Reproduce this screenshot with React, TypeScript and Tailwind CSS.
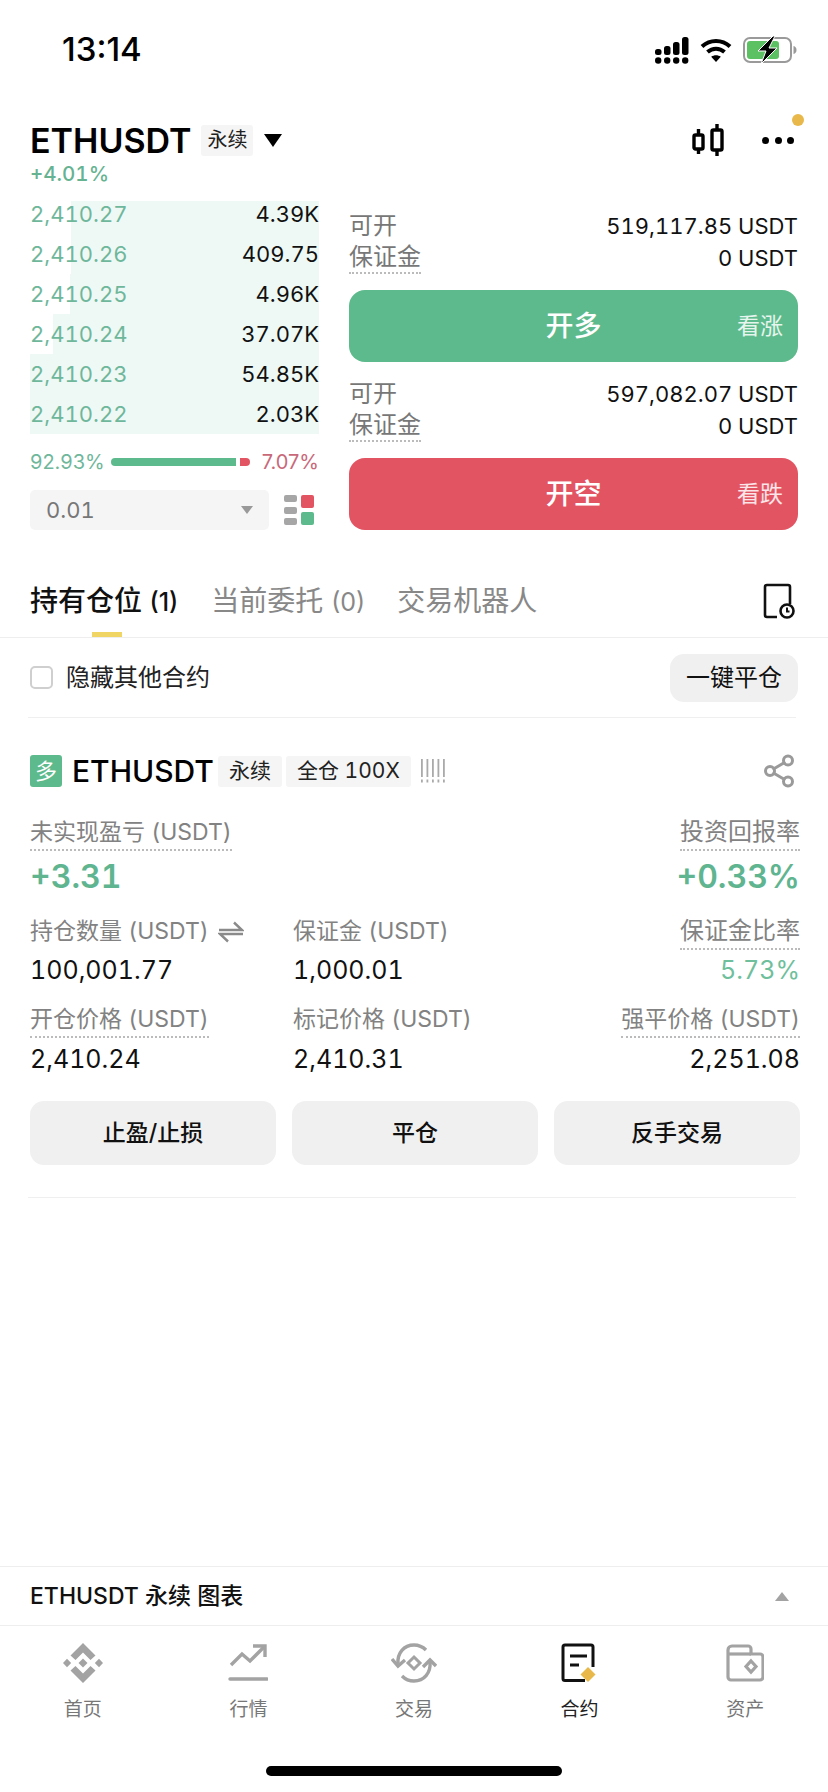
import { Share2 } from "lucide-react";

const FONT = 'font-["Inter","Noto_Sans_CJK_SC",sans-serif]';

function SignalIcon() {
  return (
    <svg width="34" height="27" viewBox="0 0 34 27" fill="#000">
      <rect x="0" y="12" width="6.5" height="6" rx="2.5" />
      <rect x="9" y="9" width="6.5" height="9" rx="2.5" />
      <rect x="18" y="5" width="6.5" height="13" rx="2.5" />
      <rect x="27" y="0" width="6.5" height="18" rx="2.5" />
      <circle cx="3.2" cy="23.5" r="3.2" />
      <circle cx="12.2" cy="23.5" r="3.2" />
      <circle cx="21.2" cy="23.5" r="3.2" />
      <circle cx="30.2" cy="23.5" r="3.2" />
    </svg>
  );
}

function WifiIcon() {
  return (
    <svg width="32" height="26" viewBox="0 0 32 26" fill="none" stroke="#000" strokeWidth="4">
      <path d="M2 9.5C10 2 22 2 30 9.5" />
      <path d="M7.5 15C12.5 10.6 19.5 10.6 24.5 15" />
      <path d="M16 25l-4.8-5.2c2.8-2 6.8-2 9.6 0z" fill="#000" stroke="none" />
    </svg>
  );
}

function BatteryIcon() {
  return (
    <svg width="54" height="28" viewBox="0 0 54 28" fill="none">
      <rect x="1" y="2" width="47" height="24" rx="6" stroke="#9a9a9a" strokeWidth="2" />
      <rect x="4" y="5" width="32" height="18" rx="3" fill="#5cc163" />
      <path d="M50.5 10c2 .6 3 2 3 4s-1 3.4-3 4z" fill="#9a9a9a" />
      <path d="M30 0L15 15h8l-5 13 16-16h-8l6-12z" fill="#000" stroke="#fff" strokeWidth="1" />
    </svg>
  );
}

function CandleIcon() {
  return (
    <svg width="32" height="34" viewBox="0 0 32 34" fill="none" stroke="#000" strokeWidth="3.4">
      <rect x="2" y="12" width="9" height="14" rx="1.5" />
      <path d="M6.5 6v6M6.5 26v5" />
      <rect x="20" y="7" width="10" height="20" rx="1.5" />
      <path d="M25 1v6M25 27v6" />
    </svg>
  );
}

function LayoutIcon() {
  return (
    <svg width="30" height="30" viewBox="0 0 30 30">
      <rect x="0" y="0" width="13" height="7" rx="2" fill="#a6a6a6" />
      <rect x="0" y="12" width="13" height="7" rx="2" fill="#a6a6a6" />
      <rect x="0" y="23" width="13" height="7" rx="2" fill="#a6a6a6" />
      <rect x="17" y="0" width="13" height="13" rx="2" fill="#e35463" />
      <rect x="17" y="17" width="13" height="13" rx="2" fill="#5dba8c" />
    </svg>
  );
}

function HistoryIcon() {
  return (
    <svg width="32" height="36" viewBox="0 0 32 36" fill="none" stroke="#111" strokeWidth="2.6">
      <path d="M14 34H4a2 2 0 0 1-2-2V4a2 2 0 0 1 2-2h21a2 2 0 0 1 2 2v17" />
      <circle cx="24" cy="28" r="6.5" />
      <path d="M24 24.5V28.5h2.5" strokeWidth="2" />
    </svg>
  );
}

function LeverageMarks() {
  return (
    <svg width="25" height="24" viewBox="0 0 25 24" fill="#aaa">
      {[0, 5.5, 11, 16.5, 22].map((x) => (
        <g key={x}>
          <rect x={x} y="0" width="1.8" height="18" />
          <rect x={x} y="20.5" width="1.8" height="3" />
        </g>
      ))}
    </svg>
  );
}

function SwapIcon() {
  return (
    <svg width="26" height="22" viewBox="0 0 26 22" fill="none" stroke="#8a8a8a" strokeWidth="2.4">
      <path d="M1 9h23L16 1.5" />
      <path d="M25 13H2l8 7.5" />
    </svg>
  );
}

function BinanceIcon() {
  return (
    <svg width="40" height="40" viewBox="0 0 40 40" fill="#a3a3a3">
      <polygon points="20,15.5 24.5,20 20,24.5 15.5,20" />
      <polygon points="4,15.8 8.2,20 4,24.2 0,20" />
      <polygon points="36,15.8 40,20 36,24.2 31.8,20" />
      <polygon points="20,0 32.5,12.5 27.5,17 20,9.5 12.5,17 7.5,12.5" />
      <polygon points="20,40 32.5,27.5 27.5,23 20,30.5 12.5,23 7.5,27.5" />
    </svg>
  );
}

function MarketIcon() {
  return (
    <svg width="40" height="40" viewBox="0 0 40 40" fill="none" stroke="#a3a3a3" strokeWidth="3.4">
      <path d="M3 22l11-11 8 7L36 4" />
      <path d="M25 3h12v11" />
      <path d="M2 36h37" strokeLinecap="round" />
    </svg>
  );
}

function TradeIcon() {
  return (
    <svg width="46" height="40" viewBox="0 0 46 40" fill="none" stroke="#a3a3a3" strokeWidth="3.4">
      <path d="M7 21C6 10 13 2 23 2c5 0 9 2 12 5" />
      <path d="M39 19c1 11-6 19-16 19-5 0-9-2-12-5" />
      <path d="M1 16l6 7 7-6" />
      <path d="M32 24l7-7 6 6" />
      <polygon points="23,14 29,20 23,26 17,20" strokeWidth="3" />
    </svg>
  );
}

function FuturesIcon() {
  return (
    <svg width="38" height="40" viewBox="0 0 38 40" fill="none">
      <path d="M24 37.5H4a2 2 0 0 1-2-2V4a2 2 0 0 1 2-2h26a2 2 0 0 1 2 2v20" stroke="#111" strokeWidth="3" />
      <path d="M9 13h17M9 22h9" stroke="#111" strokeWidth="3" />
      <polygon points="27,24 34.5,31.5 27,39 19.5,31.5" fill="#e8b84a" />
    </svg>
  );
}

function WalletIcon() {
  return (
    <svg width="38" height="38" viewBox="0 0 38 38" fill="none" stroke="#a3a3a3" strokeWidth="3.2">
      <path d="M2 6a4 4 0 0 1 4-4h16a3 3 0 0 1 3 3v5h9a3 3 0 0 1 3 3v20a3 3 0 0 1-3 3H5a3 3 0 0 1-3-3z" />
      <path d="M2 10h23" />
      <polygon points="25,17 30,22.5 25,28 20,22.5" />
    </svg>
  );
}

const bookRows = [
  { price: "2,410.27", size: "4.39K", left: "left-[41px]", top: "top-[7px]" },
  { price: "2,410.26", size: "409.75", left: "left-[41px]", top: "top-0" },
  { price: "2,410.25", size: "4.96K", left: "left-[40px]", top: "top-0" },
  { price: "2,410.24", size: "37.07K", left: "left-[23px]", top: "top-0" },
  { price: "2,410.23", size: "54.85K", left: "left-0", top: "top-0" },
  { price: "2,410.22", size: "2.03K", left: "left-0", top: "top-0" },
];

function BookRow({ price, size, left, top }: { price: string; size: string; left: string; top: string }) {
  return (
    <div className="relative flex h-[40px] items-center justify-between text-[22px]">
      <div className={`absolute ${left} ${top} right-0 bottom-0 bg-[#eef9f5]`} />
      <span className="relative text-[#6fb79b]">{price}</span>
      <span className="relative text-[#111]">{size}</span>
    </div>
  );
}

function BalanceRows({ open }: { open: string }) {
  return (
    <div className="text-[22px]">
      <div className="flex h-[32px] items-center justify-between">
        <span className="text-[24px] text-[#777]">可开</span>
        <span className="text-[#111]">{open}</span>
      </div>
      <div className="flex h-[32px] items-center justify-between">
        <span className="border-b-2 border-dotted border-[#bbb] text-[24px] leading-[30px] text-[#777]">保证金</span>
        <span className="text-[#111]">0 USDT</span>
      </div>
    </div>
  );
}

function ActionButton({ label, hint, color }: { label: string; hint: string; color: string }) {
  return (
    <div className={`relative flex h-[72px] items-center justify-center rounded-[16px] text-white ${color}`}>
      <span className="text-[28px] font-medium">{label}</span>
      <span className="absolute right-[15px] text-[23px] text-white/85">{hint}</span>
    </div>
  );
}

function Tag({ children }: { children: React.ReactNode }) {
  return (
    <span className="flex h-[31px] items-center rounded-[3px] bg-[#f5f5f5] px-[11px] text-[21px] text-[#222]">
      {children}
    </span>
  );
}

function Metric({
  label,
  value,
  dotted = false,
  right = false,
  extra,
  labelSize = "text-[23px]",
  valueClass,
  valueHeight,
}: {
  label: string;
  value: string;
  dotted?: boolean;
  right?: boolean;
  extra?: React.ReactNode;
  labelSize?: string;
  valueClass: string;
  valueHeight: string;
}) {
  return (
    <div className={`flex flex-col ${right ? "items-end" : "items-start"}`}>
      <div className="flex h-[36px] items-start gap-[9px]">
        <span
          className={`border-b-2 border-dotted leading-[34px] text-[#828282] ${labelSize} ${
            dotted ? "border-[#bbb]" : "border-transparent"
          }`}
        >
          {label}
        </span>
        {extra}
      </div>
      <div className={`flex items-center ${valueHeight} ${valueClass}`}>{value}</div>
    </div>
  );
}

function NavItem({ icon, label, active = false }: { icon: React.ReactNode; label: string; active?: boolean }) {
  return (
    <div className="flex flex-col items-center">
      <div className="flex h-[40px] items-center justify-center">{icon}</div>
      <div className={`mt-[13px] text-[19px] leading-[28px] ${active ? "text-[#222]" : "text-[#777]"}`}>{label}</div>
    </div>
  );
}

export default function App() {
  return (
    <div className={`${FONT} flex h-[1792px] w-[828px] flex-col overflow-hidden bg-white tabular-nums`}>
      {/* status bar */}
      <div className="flex h-[100px] items-start justify-between pr-[31px] pl-[62px]">
        <div className="flex h-[100px] items-center text-[33px] font-medium text-black normal-nums">13:14</div>
        <div className="flex h-[100px] items-center gap-[11px]">
          <SignalIcon />
          <WifiIcon />
          <BatteryIcon />
        </div>
      </div>

      {/* symbol header */}
      <div className="px-[30px] pt-[20px]">
        <div className="flex h-[40px] items-center">
          <span className="pt-[1px] text-[34px] font-semibold text-black">ETHUSDT</span>
          <span className="ml-[10px] flex h-[31px] items-center rounded-[3px] bg-[#f5f5f5] px-[6px] text-[20px] text-[#222]">
            永续
          </span>
          <svg className="ml-[11px]" width="18" height="13" viewBox="0 0 18 13" fill="#000">
            <path d="M0 0h18L9 13z" />
          </svg>
          <div className="ml-auto flex items-center pr-[4px]">
            <CandleIcon />
            <div className="relative ml-[38px] flex w-[32px] justify-between">
              <span className="h-[7px] w-[7px] rounded-full bg-black" />
              <span className="h-[7px] w-[7px] rounded-full bg-black" />
              <span className="h-[7px] w-[7px] rounded-full bg-black" />
              <span className="absolute -top-[23px] -right-[10px] h-[12px] w-[12px] rounded-full bg-[#e8b84a]" />
            </div>
          </div>
        </div>
        <div className="flex h-[28px] items-center text-[20.5px] font-medium text-[#66b391]">+4.01%</div>
      </div>

      {/* order book and open buttons */}
      <div className="flex pr-[30px] pl-[30px]">
        <div className="w-[289px] pt-[6px]">
          {bookRows.map((row) => (
            <BookRow key={row.price} {...row} />
          ))}
          <div className="mt-[18px] flex h-[20px] items-center text-[20px] normal-nums">
            <span className="w-[71px] text-[#6fb79b]">92.93%</span>
            <span className="ml-[10px] h-[8px] w-[125px] rounded-l-full bg-[#5dba8c]" />
            <span className="ml-[4px] h-[8px] w-[10px] rounded-r-full bg-[#e35463]" />
            <span className="ml-auto text-[#c8697a]">7.07%</span>
          </div>
          <div className="mt-[18px] flex items-center justify-between">
            <div className="flex h-[40px] w-[239px] items-center justify-between rounded-[5px] bg-[#f5f5f5] pr-[16px] pl-[16px] text-[22px] text-[#777]">
              <span>0.01</span>
              <svg width="12" height="8" viewBox="0 0 12 8" fill="#999">
                <path d="M0 0h12L6 8z" />
              </svg>
            </div>
            <div className="pr-[5px]">
              <LayoutIcon />
            </div>
          </div>
        </div>

        <div className="ml-[30px] w-[449px]">
          <div className="pt-[22px]">
            <BalanceRows open="519,117.85 USDT" />
          </div>
          <div className="mt-[16px]">
            <ActionButton label="开多" hint="看涨" color="bg-[#5dba8c]" />
          </div>
          <div className="mt-[16px]">
            <BalanceRows open="597,082.07 USDT" />
          </div>
          <div className="mt-[16px]">
            <ActionButton label="开空" hint="看跌" color="bg-[#e35463]" />
          </div>
        </div>
      </div>

      {/* tabs */}
      <div className="h-[108px] border-b-[1px] border-[#eeeeee] pt-[52px]">
        <div className="flex h-[38px] items-center px-[30px] text-[28px] normal-nums">
          <span className="font-medium text-[#111]">
            持有仓位 <span className="text-[25px]">(1)</span>
          </span>
          <span className="ml-[33px] text-[#888]">
            当前委托 <span className="text-[25px]">(0)</span>
          </span>
          <span className="ml-[32px] text-[#888]">交易机器人</span>
          <div className="ml-auto pr-[3px]">
            <HistoryIcon />
          </div>
        </div>
        <div className="mt-[12px] ml-[92px] h-[5px] w-[30px] bg-[#f0d564]" />
      </div>

      {/* filter row */}
      <div className="mr-[32px] ml-[28px] flex h-[80px] items-center justify-between border-b-[1px] border-[#efefef] pl-[2px]">
        <div className="flex items-center">
          <span className="h-[23px] w-[23px] rounded-[5px] border-2 border-[#cfcfcf]" />
          <span className="ml-[13px] text-[24px] text-[#222]">隐藏其他合约</span>
        </div>
        <div className="-mr-[2px] flex h-[48px] w-[128px] items-center justify-center rounded-[14px] bg-[#f0f0f0] text-[24px] text-[#111]">
          一键平仓
        </div>
      </div>

      {/* position card */}
      <div className="mt-[37px] flex h-[32px] items-center px-[30px]">
        <span className="flex h-[32px] w-[32px] items-center justify-center rounded-[3px] bg-[#5dba8c] text-[22px] text-white">
          多
        </span>
        <span className="ml-[10px] text-[30px] font-medium text-black">ETHUSDT</span>
        <span className="ml-[4px] flex gap-[4px]">
          <Tag>永续</Tag>
          <Tag>全仓 100X</Tag>
        </span>
        <span className="ml-[10px]">
          <LeverageMarks />
        </span>
        <Share2 className="mr-[1px] ml-auto" size={36} color="#9a9a9a" strokeWidth={2} />
      </div>

      <div className="mt-[28px] grid grid-cols-[263px_263px_1fr] px-[28px] pl-[30px]">
        <div className="col-span-2">
          <Metric label="未实现盈亏 (USDT)" value="+3.31" dotted valueHeight="h-[50px] pt-[2px]" valueClass="text-[32px] font-semibold text-[#5fb590]" />
        </div>
        <Metric label="投资回报率" labelSize="text-[24px]" value="+0.33%" dotted right valueHeight="h-[50px] pt-[2px]" valueClass="text-[32px] font-semibold text-[#5fb590]" />
      </div>

      <div className="mt-[13px] grid grid-cols-[263px_263px_1fr] px-[28px] pl-[30px]">
        <Metric label="持仓数量 (USDT)" value="100,001.77" extra={<span className="pt-[7px]"><SwapIcon /></span>} valueHeight="h-[38px] pt-[4px]" valueClass="text-[25px] text-[#111]" />
        <Metric label="保证金 (USDT)" value="1,000.01" valueHeight="h-[38px] pt-[4px]" valueClass="text-[25px] text-[#111]" />
        <Metric label="保证金比率" labelSize="text-[24px]" value="5.73%" dotted right valueHeight="h-[38px] pt-[4px]" valueClass="text-[25px] text-[#6fbf9c]" />
      </div>

      <div className="mt-[14px] grid grid-cols-[263px_263px_1fr] px-[28px] pl-[30px]">
        <Metric label="开仓价格 (USDT)" value="2,410.24" dotted valueHeight="h-[40px] pt-[4px]" valueClass="text-[25px] text-[#111]" />
        <Metric label="标记价格 (USDT)" value="2,410.31" valueHeight="h-[40px] pt-[4px]" valueClass="text-[25px] text-[#111]" />
        <Metric label="强平价格 (USDT)" value="2,251.08" dotted right valueHeight="h-[40px] pt-[4px]" valueClass="text-[25px] text-[#111]" />
      </div>

      <div className="mt-[23px] grid grid-cols-3 gap-[16px] pr-[28px] pl-[30px]">
        {["止盈/止损", "平仓", "反手交易"].map((label) => (
          <div
            key={label}
            className="flex h-[64px] items-center justify-center rounded-[14px] bg-[#f0f0f0] text-[23px] font-medium text-[#111]"
          >
            {label}
          </div>
        ))}
      </div>

      <div className="mt-[32px] mr-[32px] ml-[28px] border-b-[1px] border-[#efefef]" />

      <div className="flex-1" />

      {/* chart drawer */}
      <div className="flex h-[60px] items-center justify-between border-y-[1px] border-[#eeeeee] pr-[39px] pl-[30px]">
        <span className="text-[23px] font-medium text-[#111]">ETHUSDT 永续 图表</span>
        <svg width="14" height="9" viewBox="0 0 14 9" fill="#a3a3a3">
          <path d="M7 0l7 9H0z" />
        </svg>
      </div>

      {/* bottom navigation */}
      <div className="grid grid-cols-5 pt-[17px]">
        <NavItem icon={<BinanceIcon />} label="首页" />
        <NavItem icon={<MarketIcon />} label="行情" />
        <NavItem icon={<TradeIcon />} label="交易" />
        <NavItem icon={<FuturesIcon />} label="合约" active />
        <NavItem icon={<WalletIcon />} label="资产" />
      </div>

      <div className="mt-[42px] mb-[16px] flex justify-center">
        <div className="h-[10px] w-[296px] rounded-full bg-black" />
      </div>
    </div>
  );
}
